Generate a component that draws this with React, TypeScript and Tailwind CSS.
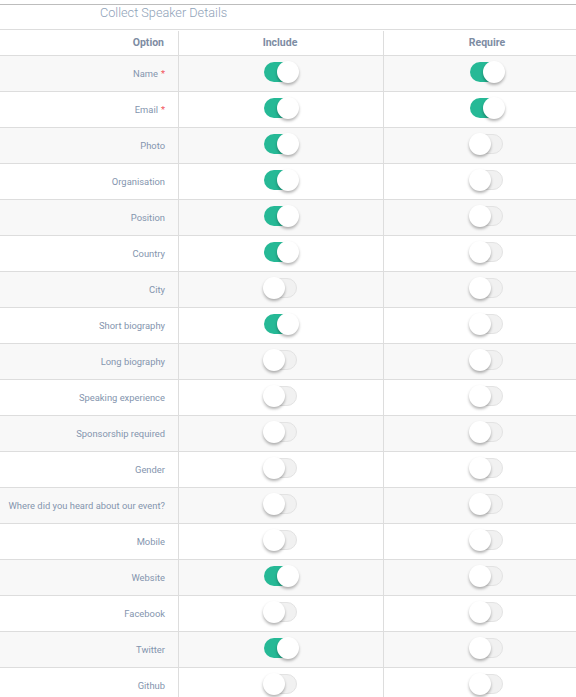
import React from "react";

type Row = { label: string; required?: boolean; include: boolean; require: boolean };

const rows: Row[] = [
  { label: "Name", required: true, include: true, require: true },
  { label: "Email", required: true, include: true, require: true },
  { label: "Photo", include: true, require: false },
  { label: "Organisation", include: true, require: false },
  { label: "Position", include: true, require: false },
  { label: "Country", include: true, require: false },
  { label: "City", include: false, require: false },
  { label: "Short biography", include: true, require: false },
  { label: "Long biography", include: false, require: false },
  { label: "Speaking experience", include: false, require: false },
  { label: "Sponsorship required", include: false, require: false },
  { label: "Gender", include: false, require: false },
  { label: "Where did you heard about our event?", include: false, require: false },
  { label: "Mobile", include: false, require: false },
  { label: "Website", include: true, require: false },
  { label: "Facebook", include: false, require: false },
  { label: "Twitter", include: true, require: false },
  { label: "Github", include: false, require: false },
];

function Toggle({ on }: { on: boolean }) {
  return (
    <div
      className={
        on
          ? "relative h-[20px] w-[33px] rounded-full bg-[#26b996]"
          : "relative h-[20px] w-[33px] rounded-full border border-[#e3e3e3] bg-[#f1f1f1]"
      }
    >
      <div
        className={
          on
            ? "absolute top-[-1px] left-[13px] h-[22px] w-[22px] rounded-full bg-white shadow-[0_2px_3px_rgba(0,0,0,0.3)]"
            : "absolute top-[-2px] left-[-2px] h-[22px] w-[22px] rounded-full bg-white shadow-[0_2px_3px_rgba(0,0,0,0.3)]"
        }
      />
    </div>
  );
}

export default function App() {
  return (
    <div className="h-[697px] w-[576px] overflow-hidden bg-white font-['Roboto',sans-serif]">
      <div className="mt-[4px] border-t border-[#bdbdbd]">
        <div className="h-[24px] pl-[100px] text-[12.7px] font-light leading-[16px] text-[#8fa2b8]">
          Collect Speaker Details
        </div>
        <div className="w-[590px] border-t border-[#dddddd]">
          <div className="flex h-[26px] border-b border-[#dddddd] pt-[1px] text-[10.5px] font-bold text-[#7d8ca3]">
            <div className="flex w-[179px] items-center justify-end border-r border-[#dddddd] pr-[14px]">
              Option
            </div>
            <div className="flex w-[205px] items-center justify-center border-r border-[#dddddd] pr-[2px]">
              Include
            </div>
            <div className="flex flex-1 items-center justify-center">Require</div>
          </div>
          {rows.map((r, i) => (
            <div
              key={r.label}
              className={
                "flex h-[36px] border-b border-[#dddddd] " +
                (i % 2 === 0 ? "bg-[#f8f8f8]" : "bg-white")
              }
            >
              <div className="flex w-[179px] items-center justify-end whitespace-nowrap border-r border-[#dddddd] pr-[13px] pt-[2px] text-[9.4px] text-[#8495ae]">
                {r.label}
                {r.required && <span className="ml-[3px] text-[#f2545b]">*</span>}
              </div>
              <div className="flex w-[205px] items-center justify-center border-r border-[#dddddd] pb-[3px] pr-[2px]">
                <Toggle on={r.include} />
              </div>
              <div className="flex flex-1 items-center justify-center pb-[3px] pr-[2px]">
                <Toggle on={r.require} />
              </div>
            </div>
          ))}
        </div>
      </div>
    </div>
  );
}
